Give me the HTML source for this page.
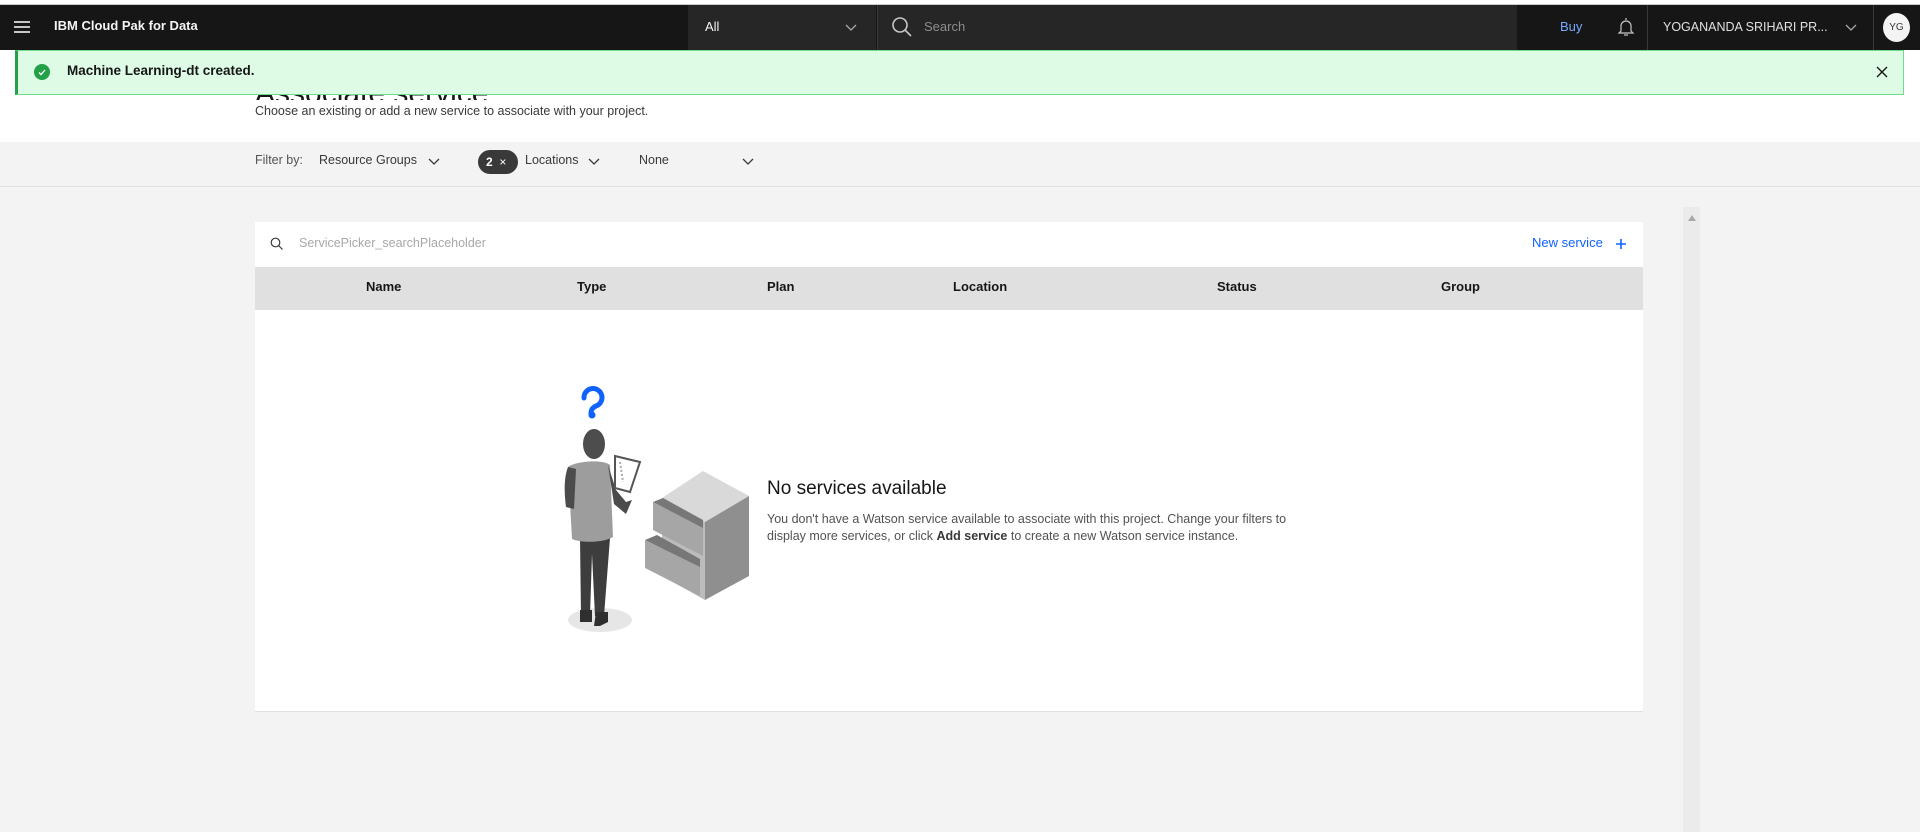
<!DOCTYPE html>
<html><head><meta charset="utf-8"><style>
*{margin:0;padding:0;box-sizing:border-box}
body{width:1920px;height:832px;overflow:hidden;background:#f3f3f3;font-family:"Liberation Sans",sans-serif;position:relative}
.a{position:absolute;white-space:nowrap}
</style></head><body>
<div class="a" style="left:0;top:0;width:1920px;height:5px;background:#fff;border-bottom:1px solid #ccc"></div>
<div class="a" style="left:0;top:5px;width:1920px;height:45px;background:#161616"></div>
<div class="a" style="left:14px;top:21px;width:16px;height:12px;border-top:2px solid #c6c6c6;border-bottom:2px solid #c6c6c6"></div>
<div class="a" style="left:14px;top:26px;width:16px;height:2px;background:#c6c6c6"></div>
<div class="a" style="left:54px;top:18px;color:#f4f4f4;font-size:13px;font-weight:bold">IBM Cloud Pak for Data</div>
<div class="a" style="left:688px;top:5px;width:188px;height:45px;background:#262626"></div>
<div class="a" style="left:705px;top:19px;color:#f4f4f4;font-size:13px">All</div>
<svg class="a" style="left:845px;top:24px" width="12" height="8"><path d="M1 1l5 5 5-5" stroke="#a8a8a8" fill="none" stroke-width="1.3"/></svg>
<div class="a" style="left:877px;top:5px;width:640px;height:45px;background:#262626;border-left:1px solid #393939"></div>
<svg class="a" style="left:891px;top:16px" width="22" height="22"><circle cx="9" cy="9" r="7" stroke="#c6c6c6" stroke-width="1.6" fill="none"/><path d="M14 14l6 6" stroke="#c6c6c6" stroke-width="1.6"/></svg>
<div class="a" style="left:924px;top:19px;color:#8d8d8d;font-size:13px">Search</div>
<div class="a" style="left:1560px;top:19px;color:#78a9ff;font-size:13px">Buy</div>
<svg class="a" style="left:1617px;top:16px" width="18" height="22"><path d="M9 2v2M4 15V10a5 5 0 0 1 10 0v5l2 2H2z" stroke="#c6c6c6" fill="none" stroke-width="1.2"/><path d="M7 19h4" stroke="#c6c6c6" stroke-width="1.2"/></svg>
<div class="a" style="left:1647px;top:5px;width:1px;height:45px;background:#393939"></div>
<div class="a" style="left:1663px;top:20px;color:#e0e0e0;font-size:12.5px">YOGANANDA SRIHARI PR...</div>
<svg class="a" style="left:1845px;top:24px" width="12" height="8"><path d="M1 1l5 5 5-5" stroke="#a8a8a8" fill="none" stroke-width="1.3"/></svg>
<div class="a" style="left:1873px;top:5px;width:1px;height:45px;background:#393939"></div>
<div class="a" style="left:1883px;top:13px;width:27px;height:29px;border-radius:50%;background:#f4f4f4;color:#393939;font-size:10px;text-align:center;line-height:29px">YG</div>

<div class="a" style="left:0;top:50px;width:1920px;height:92px;background:#fff"></div>
<div class="a" style="left:255px;top:77px;font-size:30px;line-height:34px;color:#161616">Associate service</div>
<div class="a" style="left:15px;top:50px;width:1889px;height:45px;background:#defbe6;border:1px solid #6fdc8c;border-left:3px solid #24a148"></div>
<div class="a" style="left:34px;top:64px;width:16px;height:16px;border-radius:50%;background:#24a148"></div>
<svg class="a" style="left:34px;top:64px" width="16" height="16"><path d="M5 8.5l2 2 4-4.5" stroke="#fff" fill="none" stroke-width="1.3"/></svg>
<div class="a" style="left:67px;top:63px;font-size:13.5px;font-weight:bold;color:#161616">Machine Learning-dt created.</div>
<svg class="a" style="left:1876px;top:66px" width="12" height="12"><path d="M1 1l10 10M11 1L1 11" stroke="#161616" stroke-width="1.4"/></svg>
<div class="a" style="left:0;top:100px;width:1920px;height:42px;background:#fff"></div>
<div class="a" style="left:255px;top:104px;font-size:12.5px;color:#393939">Choose an existing or add a new service to associate with your project.</div>

<div class="a" style="left:0;top:142px;width:1920px;height:45px;background:#f3f3f3;border-bottom:1px solid #e0e0e0"></div>
<div class="a" style="left:255px;top:153px;font-size:12.5px;color:#525252">Filter by:</div>
<div class="a" style="left:319px;top:153px;font-size:12.5px;color:#393939">Resource Groups</div>
<svg class="a" style="left:428px;top:158px" width="12" height="8"><path d="M1 1l5 5 5-5" stroke="#393939" fill="none" stroke-width="1.3"/></svg>
<div class="a" style="left:478px;top:150px;width:40px;height:24px;border-radius:12px;background:#393939;color:#fff;font-size:12px;line-height:24px;padding-left:8px"><b>2</b>&nbsp;&nbsp;×</div>
<div class="a" style="left:525px;top:153px;font-size:12.5px;color:#393939">Locations</div>
<svg class="a" style="left:588px;top:158px" width="12" height="8"><path d="M1 1l5 5 5-5" stroke="#393939" fill="none" stroke-width="1.3"/></svg>
<div class="a" style="left:639px;top:153px;font-size:12.5px;color:#393939">None</div>
<svg class="a" style="left:742px;top:158px" width="12" height="8"><path d="M1 1l5 5 5-5" stroke="#393939" fill="none" stroke-width="1.3"/></svg>

<div class="a" style="left:1683px;top:207px;width:17px;height:625px;background:#ebebeb"></div>
<svg class="a" style="left:1688px;top:215px" width="8" height="6"><path d="M0 6L4 0 8 6z" fill="#a8a8a8"/></svg>

<div class="a" style="left:255px;top:222px;width:1388px;height:490px;background:#fff;border-bottom:1px solid #e0e0e0"></div>
<svg class="a" style="left:270px;top:237px" width="14" height="14"><circle cx="5.5" cy="5.5" r="4.3" stroke="#393939" fill="none" stroke-width="1.2"/><path d="M8.5 8.5l4 4" stroke="#393939" stroke-width="1.2"/></svg>
<div class="a" style="left:299px;top:236px;font-size:12.5px;color:#a8a8a8">ServicePicker_searchPlaceholder</div>
<div class="a" style="left:1532px;top:235px;font-size:13px;color:#0f62fe">New service</div>
<svg class="a" style="left:1615px;top:238px" width="12" height="12"><path d="M6 1v10M1 6h10" stroke="#0f62fe" stroke-width="1.6"/></svg>
<div class="a" style="left:255px;top:267px;width:1388px;height:43px;background:#e0e0e0"></div>
<div class="a" style="left:366px;top:279px;font-size:13px;font-weight:bold;color:#161616">Name</div>
<div class="a" style="left:577px;top:279px;font-size:13px;font-weight:bold;color:#161616">Type</div>
<div class="a" style="left:767px;top:279px;font-size:13px;font-weight:bold;color:#161616">Plan</div>
<div class="a" style="left:953px;top:279px;font-size:13px;font-weight:bold;color:#161616">Location</div>
<div class="a" style="left:1217px;top:279px;font-size:13px;font-weight:bold;color:#161616">Status</div>
<div class="a" style="left:1441px;top:279px;font-size:13px;font-weight:bold;color:#161616">Group</div>

<svg class="a" style="left:550px;top:370px" width="210" height="270">
<ellipse cx="50" cy="250" rx="32" ry="12" fill="#e6e6e6"/>
<path d="M34 28a9 9 0 1 1 12 8c-4 2-5 4-5 8" stroke="#0f62fe" stroke-width="5" fill="none" stroke-linecap="round"/>
<circle cx="42" cy="45" r="3.5" fill="#0f62fe"/>
<path d="M30 168h30l-6 78h-9l-3-62-2 62h-9z" fill="#3d3d3d"/>
<path d="M30 240h12v12h-12zM46 242h12v10l-8 4h-6z" fill="#2f2f2f"/>
<path d="M18 97c8-6 35-8 42-2l3 72c-10 6-32 6-41 2z" fill="#9d9d9d"/>
<path d="M18 97c-4 10-4 25-2 40l8 2 2-40zM58 95l8 25 10 12 6-2-6 14-12-10z" fill="#4b4b4b"/>
<ellipse cx="44" cy="74" rx="11" ry="15" fill="#4d4d4d"/>
<path d="M65 86l25 6-10 30-15-4z" fill="#fff" stroke="#555" stroke-width="2"/>
<path d="M70 92l3 20" stroke="#aaa" stroke-width="2" stroke-dasharray="2 2"/>
<path d="M112 128l41-27 46 25-44 26z" fill="#d9d9d9"/>
<path d="M155 152l44-26v80l-44 24z" fill="#8f8f8f"/>
<path d="M112 128l43 24v78l-43-24z" fill="#bcbcbc"/>
<path d="M103 132l50 26v28l-50-26z" fill="#a6a6a6"/>
<path d="M103 132l10-4 40 22v8z" fill="#777"/>
<path d="M95 170l55 27v29l-55-28z" fill="#a6a6a6"/>
<path d="M95 170l12-5 43 24v8z" fill="#777"/>
</svg>

<div class="a" style="left:767px;top:478px;font-size:19px;color:#161616">No services available</div>
<div class="a" style="left:767px;top:511px;font-size:12.5px;line-height:17px;color:#525252">You don't have a Watson service available to associate with this project. Change your filters to<br>display more services, or click <b style="color:#393939">Add service</b> to create a new Watson service instance.</div>
</body></html>
